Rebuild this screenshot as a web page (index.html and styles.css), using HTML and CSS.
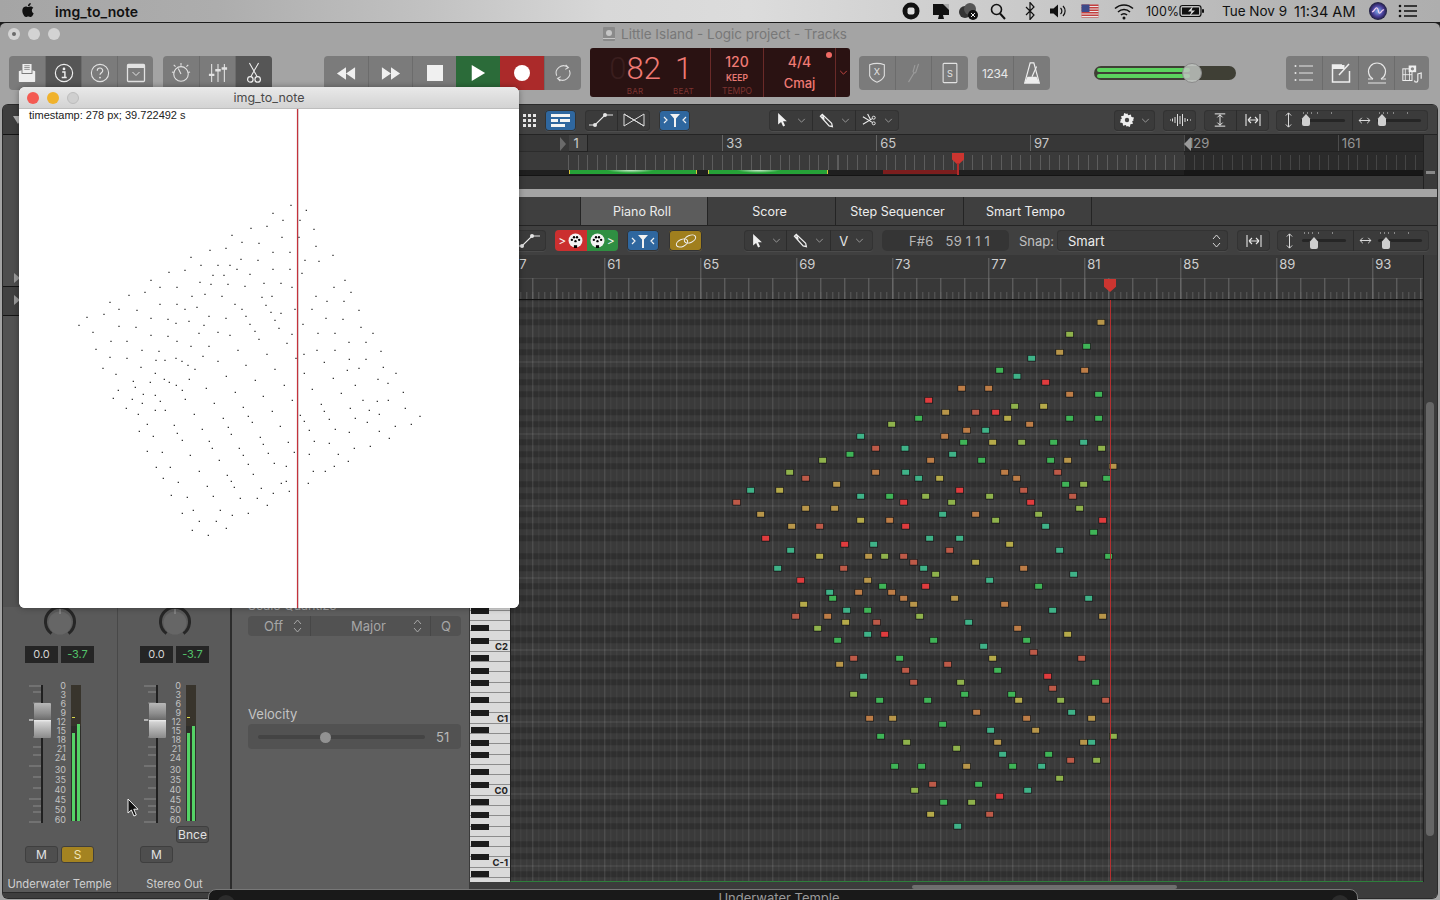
FILE: index.html
```html
<!DOCTYPE html>
<html lang="en">
<head>
<meta charset="utf-8">
<title>img_to_note</title>
<link rel="stylesheet" href="styles.css">
</head>
<body>
<svg class="defs" width="0" height="0">
  <defs>
    <symbol id="i-chev" viewBox="0 0 10 6"><path d="M1 1l4 4 4-4" fill="none" stroke="currentColor" stroke-width="1"/></symbol>
    <symbol id="i-ptr" viewBox="0 0 12 16"><path d="M1 0v13l3.400-2.800 2.300 5.200 2.200-1-2.300-5H11z" fill="currentColor"/></symbol>
    <symbol id="i-pen" viewBox="0 0 16 16"><path d="M1.500 3.500l2-2 10 9.500.8 3.500-3.500-.8zM3.500 1.500l1.500 4-3.500-2" fill="none" stroke="currentColor" stroke-width="1.300"/></symbol>
    <symbol id="i-sci" viewBox="0 0 16 16"><path d="M1 4l10 6M1 12l10-6M6 1l3 6" fill="none" stroke="currentColor" stroke-width="1.200"/><circle cx="12.500" cy="5" r="1.600" fill="none" stroke="currentColor"/><circle cx="12.500" cy="11" r="1.600" fill="none" stroke="currentColor"/></symbol>
    <symbol id="i-fith" viewBox="0 0 16 14"><path d="M1 1v12M15 1v12M3 7h10M3 7l3-3M3 7l3 3M13 7l-3-3M13 7l-3 3" fill="none" stroke="currentColor" stroke-width="1.100"/></symbol>
    <symbol id="i-curve" viewBox="0 0 26 16"><path d="M1 13h6L17 3h8" fill="none" stroke="currentColor" stroke-width="1.200"/><circle cx="7" cy="13" r="2" fill="currentColor"/><circle cx="17" cy="3" r="2" fill="currentColor"/></symbol>
    <symbol id="i-catch" viewBox="0 0 24 14"><path d="M1 4l3 3-3 3M23 4l-3 3 3 3" fill="none" stroke="currentColor" stroke-width="1.200"/><path d="M7 1h10l-4 4.500V14h-2V5.500z" fill="currentColor"/></symbol>
    <symbol id="i-vert" viewBox="0 0 10 18"><path d="M5 1v16M5 1L2 4M5 1l3 3M5 17l-3-3M5 17l3-3" fill="none" stroke="currentColor" stroke-width="1.100"/></symbol>
    <symbol id="i-horz" viewBox="0 0 14 10"><path d="M1 5h12M1 5l3-3M1 5l3 3M13 5l-3-3M13 5l-3 3" fill="none" stroke="currentColor" stroke-width="1.100"/></symbol>
    <symbol id="i-thumb" viewBox="0 0 10 12"><path d="M5 0l4 4.500V10a2 2 0 01-2 2H3a2 2 0 01-2-2V4.500z" fill="currentColor"/></symbol>
    <symbol id="i-midi" viewBox="0 0 14 14"><circle cx="7" cy="7" r="6.500" fill="currentColor"/><circle cx="3.600" cy="6.400" r="1.100" class="hole"/><circle cx="5.600" cy="4" r="1.100" class="hole"/><circle cx="8.400" cy="4" r="1.100" class="hole"/><circle cx="10.400" cy="6.400" r="1.100" class="hole"/><circle cx="7" cy="7.600" r="1.100" class="hole"/><rect x="5.500" y="11.400" width="3" height="2.600" class="hole"/></symbol>
    <linearGradient id="capg" x1="0" y1="0" x2="0" y2="1">
      <stop offset="0" stop-color="#b8b8b8"/><stop offset=".3" stop-color="#8d8d8d"/><stop offset=".49" stop-color="#6a6a6a"/><stop offset=".5" stop-color="#e8e8e8"/><stop offset=".55" stop-color="#d2d2d2"/><stop offset=".8" stop-color="#a9a9a9"/><stop offset="1" stop-color="#8a8a8a"/>
    </linearGradient>
  </defs>
</svg>

<header class="menubar">
  <svg class="apple" viewBox="0 0 24 24"><path d="M12.152 6.896c-.948 0-2.415-1.078-3.960-1.040-2.040.027-3.910 1.183-4.961 3.014-2.117 3.675-.546 9.103 1.519 12.090 1.013 1.454 2.208 3.090 3.792 3.039 1.520-.065 2.090-.987 3.935-.987 1.831 0 2.350.987 3.960.948 1.637-.026 2.676-1.480 3.676-2.948 1.156-1.688 1.636-3.325 1.662-3.415-.039-.013-3.182-1.221-3.220-4.857-.026-3.040 2.480-4.494 2.597-4.559-1.429-2.090-3.623-2.324-4.390-2.376-2-.156-3.675 1.090-4.610 1.090zM15.530 3.830c.843-1.012 1.400-2.427 1.245-3.830-1.207.052-2.662.805-3.532 1.818-.78.896-1.454 2.338-1.273 3.714 1.338.104 2.715-.688 3.559-1.701"/></svg>
  <span class="app-name">img_to_note</span>
  <div class="menu-right">
    <svg class="mi" viewBox="0 0 24 18"><circle cx="12" cy="9" r="8.500" fill="#111"/><rect x="8.500" y="5.500" width="7" height="7" rx="2" fill="#ddd"/></svg>
    <svg class="mi g6" viewBox="0 0 24 18"><path d="M4 2h16v11H4z" fill="#111"/><path d="M9 17h6l-1-4h-4z" fill="#111"/><path d="M14 2l6 6V2z" fill="#aaa"/></svg>
    <svg class="mi g3" viewBox="0 0 24 18"><circle cx="9" cy="10" r="6" fill="#333"/><circle cx="14" cy="7" r="6" fill="#555"/><circle cx="17" cy="13" r="5" fill="#111"/><path d="M15 11l4 4M19 11l-4 4" stroke="#eee" stroke-width="1"/></svg>
    <svg class="mi g6" viewBox="0 0 24 18"><circle cx="10.500" cy="7.500" r="5" fill="none" stroke="#111" stroke-width="1.600"/><path d="M14 11.500l5 5.500" stroke="#111" stroke-width="2"/></svg>
    <svg class="mi g8" viewBox="0 0 24 18"><path d="M8 5l8 8-4 4.500V.5l4 4.500-8 8" fill="none" stroke="#111" stroke-width="1.200"/></svg>
    <svg class="mi g4" viewBox="0 0 24 18"><path d="M4 6.500h3.500L12 2.500v13l-4.500-4H4z" fill="#111"/><path d="M14.500 6a4 4 0 010 6M17 4a7 7 0 010 10" fill="none" stroke="#111" stroke-width="1.200"/></svg>
    <svg class="mi g8" viewBox="0 0 24 18"><rect x="3.500" y="2.500" width="17" height="13" fill="#c33f3f"/><path d="M3.500 4.500h17M3.500 7h17M3.500 9.500h17M3.500 12h17M3.500 14.500h17" stroke="#e8e8e8" stroke-width="1"/><rect x="3.500" y="2.500" width="8" height="7.500" fill="#3d4a8a"/></svg>
    <svg class="mi g10" viewBox="0 0 24 18"><path d="M3 6.500a13 13 0 0118 0M6 10a8.500 8.500 0 0112 0M9 13a4 4 0 016 0" fill="none" stroke="#111" stroke-width="1.500"/><circle cx="12" cy="16" r="1.500" fill="#111"/></svg>
    <span class="mt pct">100%</span>
    <svg class="batt" viewBox="0 0 26 14"><rect x="1" y="1.500" width="21" height="11" rx="2.500" fill="none" stroke="#111" stroke-width="1.200"/><rect x="3" y="3.500" width="17" height="7" fill="#111"/><rect x="23" y="5" width="2" height="4" rx="1" fill="#111"/><path d="M14 2l-5 5.500h3.500L10.500 12l5.500-5.500h-3.500z" fill="#ddd"/></svg>
    <span class="mt date">Tue Nov 9</span>
    <span class="mt time">11:34 AM</span>
    <svg class="siri" viewBox="0 0 20 20"><defs><radialGradient id="siri"><stop offset="0" stop-color="#7fb6f0"/><stop offset=".6" stop-color="#4b3f9a"/><stop offset="1" stop-color="#1c1c3a"/></radialGradient></defs><circle cx="10" cy="10" r="9" fill="url(#siri)"/><path d="M4 11c3-1 3-5 5-4s1 6 3 5 2-4 4-3" fill="none" stroke="#f3d0f0" stroke-width="1.200"/></svg>
    <svg class="lst" viewBox="0 0 20 14"><path d="M6 2h13M6 7h13M6 12h13" stroke="#111" stroke-width="1.600"/><circle cx="2" cy="2" r="1.300" fill="#111"/><circle cx="2" cy="7" r="1.300" fill="#111"/><circle cx="2" cy="12" r="1.300" fill="#111"/></svg>
  </div>
</header>

<div class="logic">
  <div class="titlebar">
    <div class="lights">
      <span class="dot"><span class="dot-in"></span></span><span class="dot"></span><span class="dot"></span>
    </div>
    <div class="doc-title">
      <svg class="doc-ico" viewBox="0 0 12 14"><rect width="12" height="14" rx="1" fill="#8a8a8a"/><circle cx="6" cy="6" r="3" fill="#c6c6c6"/><rect y="11" width="12" height="1" fill="#c6c6c6"/></svg>
      <span>Little Island - Logic project - Tracks</span>
    </div>
  </div>

  <div class="toolbar">
    <div class="tg w144">
      <button class="tb w36"><svg class="ti" viewBox="0 0 22 24"><path d="M6 2h10v10H6z" fill="#eee"/><path d="M8 4h6M8 6h6M8 8h6" stroke="#888" stroke-width="1"/><path d="M2 10l3-1v4h12V9l3 1v11a1 1 0 01-1 1H3a1 1 0 01-1-1z" fill="#eee"/></svg></button>
      <button class="tb w36 on"><svg class="ti" viewBox="0 0 22 22"><circle cx="11" cy="11" r="9.500" fill="none" stroke="#eee" stroke-width="1.300"/><path d="M9 10h3v6M8.500 16h5.500" fill="none" stroke="#eee" stroke-width="1.600"/><circle cx="11" cy="6.500" r="1.500" fill="#eee"/></svg></button>
      <button class="tb w36"><svg class="ti" viewBox="0 0 22 22"><circle cx="11" cy="11" r="9.500" fill="none" stroke="#e2e2e2" stroke-width="1.200"/><path d="M8 8.500a3 3 0 116 0c0 2-3 2.500-3 4.500" fill="none" stroke="#e2e2e2" stroke-width="1.300"/><circle cx="11" cy="16" r="1" fill="#e2e2e2"/></svg></button>
      <button class="tb w36"><svg class="ti" viewBox="0 0 20 20"><rect x="1.500" y="1.500" width="17" height="17" rx="1" fill="none" stroke="#e2e2e2" stroke-width="1.300"/><rect x="1.500" y="1.500" width="17" height="3.500" fill="#e2e2e2"/><path d="M6.500 9l3.500 3.500L13.500 9" fill="none" stroke="#e2e2e2"/></svg></button>
    </div>
    <div class="tg w109 ml10">
      <button class="tb w36"><svg class="ti" viewBox="0 0 22 24"><circle cx="11" cy="13" r="8" fill="none" stroke="#e2e2e2" stroke-width="1.200"/><path d="M11 1v3M3 3l2 2M19 3l-2 2M1 11l2 .5M21 11l-2 .5M11 13L8 7" fill="none" stroke="#e2e2e2" stroke-width="1.200"/></svg></button>
      <button class="tb w36"><svg class="ti" viewBox="0 0 22 22"><path d="M4 1v20M11 1v20M18 1v20" stroke="#e2e2e2" stroke-width="1.200"/><path d="M1 13h6M8 8h6M15 6h6" stroke="#e2e2e2" stroke-width="2.600"/></svg></button>
      <button class="tb w37 on"><svg class="ti" viewBox="0 0 16 24"><path d="M3 1l8.500 15M13 1L4.500 16" fill="none" stroke="#eee" stroke-width="1.200"/><circle cx="4" cy="19" r="3" fill="none" stroke="#eee" stroke-width="1.300"/><circle cx="12" cy="19" r="3" fill="none" stroke="#eee" stroke-width="1.300"/></svg></button>
    </div>
    <div class="tg w257 ml52">
      <button class="tb w44"><svg class="tr" viewBox="0 0 22 14"><path d="M11 0v14L1 7zM21 0v14L11 7z" fill="#f0f0f0"/></svg></button>
      <button class="tb w44"><svg class="tr" viewBox="0 0 22 14"><path d="M1 0v14l10-7zM11 0v14l10-7z" fill="#f0f0f0"/></svg></button>
      <button class="tb w44"><svg class="tr2" viewBox="0 0 16 16"><rect width="16" height="16" fill="#f0f0f0"/></svg></button>
      <button class="tb w44 play"><svg class="tr2" viewBox="0 0 16 18"><path d="M1 0v18l15-9z" fill="#fff"/></svg></button>
      <button class="tb w44 rec"><svg class="tr2" viewBox="0 0 16 16"><circle cx="8" cy="8" r="8" fill="#fff"/></svg></button>
      <button class="tb w37"><svg class="ti" viewBox="0 0 22 22"><path d="M4 14A8 8 0 0116 4.500M18 8a8 8 0 01-12 9.500M14 2l3 3-3.500 2M8 20l-3-3 3.500-2" fill="none" stroke="#dcdcdc" stroke-width="1.200"/></svg></button>
    </div>
    <div class="lcd ml9">
      <div class="lcd-pos">
        <div class="lcd-cell w78"><span class="big"><span class="dim-digit">0</span>82</span><span class="lab">BAR</span></div>
        <div class="lcd-cell w30"><span class="big">1</span><span class="lab">BEAT</span></div>
      </div>
      <div class="lcd-tempo"><span class="t1">120</span><span class="t2">KEEP</span><span class="t3">TEMPO</span></div>
      <div class="lcd-sig"><span class="t1">4/4</span><span class="t4">Cmaj</span><span class="lcd-dot"></span></div>
      <div class="lcd-more"><svg class="ch red" viewBox="0 0 10 6"><use href="#i-chev"/></svg></div>
    </div>
    <div class="tg w109 ml9">
      <button class="tb w36"><svg class="ti" viewBox="0 0 20 24"><path d="M2 3q8-3 16 0v12q-2 5-8 7-6-2-8-7z" fill="none" stroke="#dedede" stroke-width="1.200"/><text x="10" y="14" class="tx">X</text></svg></button>
      <button class="tb w36"><svg class="ti" viewBox="0 0 20 24"><path d="M15 2l-3 9c-.5 1.500-2.500 1-3-.5l2-7M10 12L4 22" fill="none" stroke="#9a9a9a" stroke-width="1.300"/></svg></button>
      <button class="tb w37"><svg class="ti" viewBox="0 0 18 24"><rect x="1.500" y="1.500" width="15" height="21" rx="1" fill="none" stroke="#e2e2e2" stroke-width="1.200"/><text x="9" y="16" class="tx">S</text></svg></button>
    </div>
    <div class="tg w73 ml9">
      <button class="tb w36 num">1234</button>
      <button class="tb w37"><svg class="ti" viewBox="0 0 20 24"><path d="M8 1h4l6 22H2z" fill="none" stroke="#eee" stroke-width="1.300"/><path d="M2 23l3-7h10l3 7z" fill="#eee"/><path d="M10 16L15 5" stroke="#eee" stroke-width="1.300"/></svg></button>
    </div>
    <div class="vol ml44"><div class="vol-bars"><span class="vol-b"></span><span class="vol-b"></span></div><span class="vol-knob"></span></div>
    <div class="tg w143 ml50">
      <button class="tb w36"><svg class="ti" viewBox="0 0 20 20"><path d="M5 3h14M5 10h14M5 17h14" stroke="#e6e6e6" stroke-width="1.200"/><circle cx="1.500" cy="3" r="1" fill="#e6e6e6"/><circle cx="1.500" cy="10" r="1" fill="#e6e6e6"/><circle cx="1.500" cy="17" r="1" fill="#e6e6e6"/></svg></button>
      <button class="tb w36"><svg class="ti" viewBox="0 0 20 20"><path d="M11 2H1.500v17h17V8" fill="none" stroke="#eee" stroke-width="1.500"/><path d="M1.500 2h12v4h-12z" fill="#eee"/><path d="M8 12L18 1" stroke="#eee" stroke-width="1.500"/></svg></button>
      <button class="tb w36"><svg class="ti" viewBox="0 0 20 22"><path d="M6 17a8.500 8.500 0 118 0" fill="none" stroke="#e6e6e6" stroke-width="1.200"/><path d="M1 17h5M14 17h5M1 21h18" stroke="#e6e6e6" stroke-width="1.200"/></svg></button>
      <button class="tb w35"><svg class="ti" viewBox="0 0 24 24"><rect x="1" y="7" width="11" height="14" fill="none" stroke="#eee" stroke-width="1.200"/><path d="M4 7v14M9 7v14M1 14h11" stroke="#eee"/><rect x="8" y="3" width="9" height="8" fill="#eee"/><circle cx="12.500" cy="7" r="2" fill="#888"/><path d="M15 21a2 2 0 104 0V13l4-1v7" fill="none" stroke="#eee" stroke-width="1.400"/></svg></button>
    </div>
  </div>

  <div class="main">
    <aside class="leftcol">
      <div class="trk-top">
        <div class="trk-head"><span class="tri-down"></span></div>
        <div class="trk-fill"><span class="tri-right"></span></div>
        <div class="trk-row"><span class="tri-right"></span></div>
        <div class="trk-rest"></div>
      </div>
      <div class="mixer">
        <section class="strip s1">
          <div class="knob-row"><svg class="knob" viewBox="0 0 32 32"><circle cx="16" cy="16" r="11.500" fill="#666"/><path d="M7.500 26.500A14.500 14.500 0 1124.500 26.500" fill="none" stroke="#262626" stroke-width="3"/><path d="M16 2v5" stroke="#999" stroke-width="1"/></svg></div>
          <div class="vals"><span class="val">0.0</span><span class="val grn">-3.7</span></div>
          <div class="fader-row">
            <svg class="fader" viewBox="0 0 25 138"><path d="M2 1h12M6 7h8M6 18h8M2 35h12M6 52h8M6 62h8M6 70h8M2 81h12M6 92h8M6 103h8M2 114h12M6 121h8M6 127h8M2 137h12" stroke="#8a8a8a" stroke-width="1"/><rect x="14" width="2" height="138" fill="#202020"/><rect x="7" y="18" width="17" height="35" rx="1" fill="url(#capg)"/><path d="M2 35h4" stroke="#eee"/></svg>
            <div class="scale"><span>0</span><span>3</span><span>6</span><span>9</span><span>12</span><span>15</span><span>18</span><span>21</span><span>24</span><span class="far">30</span><span>35</span><span>40</span><span>45</span><span>50</span><span>60</span></div>
            <div class="meter"><span class="mbar b1"></span><span class="mbar b2"></span><span class="peak"></span></div>
          </div>
          <div class="bnce-row"></div>
          <div class="ms"><span class="msb">M</span><span class="msb solo">S</span></div>
          <div class="name"><span>Underwater Temple</span></div>
        </section>
        <section class="strip s2">
          <div class="knob-row"><svg class="knob" viewBox="0 0 32 32"><circle cx="16" cy="16" r="11.500" fill="#666"/><path d="M7.500 26.500A14.500 14.500 0 1124.500 26.500" fill="none" stroke="#262626" stroke-width="3"/><path d="M16 2v5" stroke="#999" stroke-width="1"/></svg></div>
          <div class="vals"><span class="val">0.0</span><span class="val grn">-3.7</span></div>
          <div class="fader-row">
            <svg class="fader" viewBox="0 0 25 138"><path d="M2 1h12M6 7h8M6 18h8M2 35h12M6 52h8M6 62h8M6 70h8M2 81h12M6 92h8M6 103h8M2 114h12M6 121h8M6 127h8M2 137h12" stroke="#8a8a8a" stroke-width="1"/><rect x="14" width="2" height="138" fill="#202020"/><rect x="7" y="18" width="17" height="35" rx="1" fill="url(#capg)"/><path d="M2 35h4" stroke="#eee"/></svg>
            <div class="scale"><span>0</span><span>3</span><span>6</span><span>9</span><span>12</span><span>15</span><span>18</span><span>21</span><span>24</span><span class="far">30</span><span>35</span><span>40</span><span>45</span><span>50</span><span>60</span></div>
            <div class="meter"><span class="mbar b1"></span><span class="mbar b2 b2s"></span><span class="peak"></span></div>
          </div>
          <div class="bnce-row"><span class="msb bnce">Bnce</span></div>
          <div class="ms"><span class="msb">M</span></div>
          <div class="name"><span>Stereo Out</span></div>
        </section>
      </div>
      <div class="left-foot"></div>
    </aside>

    <div class="rightcol">
      <section class="tracks">
        <div class="trackbar">
          <button class="plain"><svg class="gridi" viewBox="0 0 13 13"><path d="M0 0h3v3H0zM5 0h3v3H5zM10 0h3v3h-3zM0 5h3v3H0zM5 5h3v3H5zM10 5h3v3h-3zM0 10h3v3H0zM5 10h3v3H5zM10 10h3v3h-3z" fill="#e6e6e6"/></svg></button>
          <button class="dg blue w31"><svg class="listi" viewBox="0 0 19 13"><path d="M0 0h19v3H0zM0 5h7v3H0zM9 5h10v3H9zM0 10h14v3H0z" fill="#f4f4f4"/></svg></button>
          <div class="dg w65 ml9">
            <button class="seg"><svg class="si26" viewBox="0 0 26 16"><use href="#i-curve"/></svg></button>
            <button class="seg"><svg class="si22" viewBox="0 0 22 14"><path d="M1 1v12l20-12v12zM1 1l20 12" fill="none" stroke="#ddd" stroke-width="1"/></svg></button>
          </div>
          <button class="dg blue w31 ml9"><svg class="si24" viewBox="0 0 24 14"><use href="#i-catch"/></svg></button>
          <div class="dg w130 tools">
            <button class="seg"><svg class="ptr" viewBox="0 0 12 16"><use href="#i-ptr"/></svg><svg class="ch" viewBox="0 0 10 6"><use href="#i-chev"/></svg></button>
            <button class="seg"><svg class="pen" viewBox="0 0 16 16"><use href="#i-pen"/></svg><svg class="ch" viewBox="0 0 10 6"><use href="#i-chev"/></svg></button>
            <button class="seg"><svg class="pen" viewBox="0 0 16 16"><use href="#i-sci"/></svg><svg class="ch" viewBox="0 0 10 6"><use href="#i-chev"/></svg></button>
          </div>
          <div class="dg w41 gear"><button class="seg"><svg class="gearI" viewBox="0 0 14 14"><path d="M7 0l1.300 2.200 2.600-.8.500 2.600 2.600.5-.8 2.500L14 7l-1.800 1.300.8 2.500-2.600.5-.5 2.600-2.600-.8L7 14l-1.300-2.100-2.600.8-.5-2.600L0 9.600l.8-2.500L0 7l1.800-1.300L1 3.200l2.600-.5.500-2.600 2.600.8z" fill="#eee"/><circle cx="7" cy="7" r="2.200" fill="#444"/></svg><svg class="ch" viewBox="0 0 10 6"><use href="#i-chev"/></svg></button></div>
          <button class="dg w33 ml8"><svg class="si22" viewBox="0 0 22 14"><path d="M1 7h1M3.500 5.500v3M6 4v6M8.500 1v12M11 3v8M13.500 1v12M16 5v4M18.500 6v2M21 7h1" stroke="#ddd" stroke-width="1"/></svg></button>
          <div class="dg w65 ml8">
            <button class="seg"><svg class="si16" viewBox="0 0 14 16"><path d="M1 1h12M1 15h12M7 2v12M7 2L4 5M7 2l3 3M7 14l-3-3M7 14l3-3" fill="none" stroke="#eee" stroke-width="1.100"/></svg></button>
            <button class="seg"><svg class="si16" viewBox="0 0 16 14"><use href="#i-fith"/></svg></button>
          </div>
          <div class="dg w152 ml7 zoomers">
            <div class="zm"><svg class="za" viewBox="0 0 10 18"><use href="#i-vert"/></svg><span class="ztrack"><span class="zticks"></span><svg class="zthumb" viewBox="0 0 10 12"><use href="#i-thumb"/></svg></span></div>
            <div class="zm"><svg class="zb" viewBox="0 0 14 10"><use href="#i-horz"/></svg><span class="ztrack"><span class="zticks"></span><svg class="zthumb" viewBox="0 0 10 12"><use href="#i-thumb"/></svg></span></div>
          </div>
        </div>
        <div class="overview">
          <div class="ov-main">
            <div class="ov-labels"><span class="ov-first">1</span><span>33</span><span>65</span><span>97</span><span>129</span><span>161</span></div>
            <div class="ov-ticks"></div>
            <div class="ov-regions"><span class="reg r1"></span><span class="reg r2"></span><span class="reg r3"></span></div>
            <div class="ov-low"></div>
            <span class="ov-shade"></span>
            <span class="ov-left"></span>
            <span class="ov-right"></span>
            <span class="ov-cell"></span>
            <span class="ov-head"></span><span class="ov-line"></span>
          </div>
          <div class="ov-side"><span class="ov-grab"></span></div>
        </div>
      </section>

      <section class="editor">
        <div class="inspector">
          <div class="sq-label">Scale Quantize</div>
          <div class="sq-row"><span class="sq a">Off <svg class="updown" viewBox="0 0 9 14"><path d="M1 5l3.500-4L8 5M1 9l3.500 4L8 9" fill="none" stroke="#a9a9a9"/></svg></span><span class="sq b">Major <svg class="updown" viewBox="0 0 9 14"><path d="M1 5l3.500-4L8 5M1 9l3.500 4L8 9" fill="none" stroke="#a9a9a9"/></svg></span><span class="sq c">Q</span></div>
          <div class="vel-label">Velocity</div>
          <div class="vel-box"><span class="vel-track"><span class="vel-knob"></span></span><span class="vel-val">51</span></div>
        </div>
        <div class="pane">
          <div class="tabs"><span class="tab act">Piano Roll</span><span class="tab">Score</span><span class="tab">Step Sequencer</span><span class="tab">Smart Tempo</span></div>
          <div class="edbar">
            <button class="dg w36 edfirst"><svg class="si26" viewBox="0 0 26 16"><use href="#i-curve"/></svg></button>
            <div class="midi ml9">
              <button class="md red"><span class="gt">&gt;</span><svg class="mico" viewBox="0 0 14 14"><use href="#i-midi"/></svg></button>
              <button class="md green"><svg class="mico" viewBox="0 0 14 14"><use href="#i-midi"/></svg><span class="gt">&gt;</span></button>
            </div>
            <button class="dg blue w32 ml9"><svg class="si24" viewBox="0 0 24 14"><use href="#i-catch"/></svg></button>
            <button class="dg gold w33 ml10"><svg class="si22" viewBox="0 0 22 14"><ellipse cx="7" cy="9" rx="6" ry="3.500" transform="rotate(-25 7 9)" fill="none" stroke="#eee" stroke-width="1.100"/><ellipse cx="15" cy="5" rx="6" ry="3.500" transform="rotate(-25 15 5)" fill="none" stroke="#eee" stroke-width="1.100"/></svg></button>
            <div class="dg w129 ml42">
              <button class="seg"><svg class="ptr" viewBox="0 0 12 16"><use href="#i-ptr"/></svg><svg class="ch" viewBox="0 0 10 6"><use href="#i-chev"/></svg></button>
              <button class="seg"><svg class="pen" viewBox="0 0 16 16"><use href="#i-pen"/></svg><svg class="ch" viewBox="0 0 10 6"><use href="#i-chev"/></svg></button>
              <button class="seg"><span class="vsel">V</span><svg class="ch" viewBox="0 0 10 6"><use href="#i-chev"/></svg></button>
            </div>
            <div class="readout ml9"><span>F#6</span><span class="rd2">59 1 1 1</span></div>
            <span class="snap-label">Snap:</span>
            <div class="dg w171 snap"><span>Smart</span><svg class="updown" viewBox="0 0 9 14"><path d="M1 5l3.500-4L8 5M1 9l3.500 4L8 9" fill="none" stroke="#d6d6d6"/></svg></div>
            <button class="dg w33 ml9"><svg class="si16" viewBox="0 0 16 14"><use href="#i-fith"/></svg></button>
            <div class="dg w152 ml7 zoomers">
              <div class="zm"><svg class="za" viewBox="0 0 10 18"><use href="#i-vert"/></svg><span class="ztrack"><span class="zticks"></span><svg class="zthumb t2" viewBox="0 0 10 12"><use href="#i-thumb"/></svg></span></div>
              <div class="zm"><svg class="zb" viewBox="0 0 14 10"><use href="#i-horz"/></svg><span class="ztrack"><span class="zticks"></span><svg class="zthumb t3" viewBox="0 0 10 12"><use href="#i-thumb"/></svg></span></div>
            </div>
          </div>
          <div class="rulerwrap">
            <div class="ruler">
              <div class="rlabels"><span>57</span><span>61</span><span>65</span><span>69</span><span>73</span><span>77</span><span>81</span><span>85</span><span>89</span><span>93</span></div>
              <span class="rhead"></span>
            </div>
            <div class="sidecol"></div>
          </div>
          <div class="gridrow">
            <div class="keys">
              <div class="oct">C6</div><div class="oct">C5</div><div class="oct">C4</div><div class="oct">C3</div><div class="oct">C2</div><div class="oct">C1</div><div class="oct">C0</div><div class="oct">C-1</div>
            </div>
            <div class="grid">
              <svg class="notes" viewBox="0 0 912 582">
                <g class="nn" transform="translate(210 10) scale(.33333) translate(-10.500 -7.500)">
                  <path class="nt" d="M1143 37h21v15h-21zM1019 127h21v15h-21zM677 307h21v15h-21zM1043 451h21v15h-21zM1179 469h21v15h-21zM350 523h21v15h-21zM257 595h21v15h-21zM344 595h21v15h-21zM122 613h21v15h-21zM215 649h21v15h-21zM446 739h21v15h-21z"/>
                  <path class="no" d="M1094 181h21v15h-21zM725 235h21v15h-21zM806 235h21v15h-21zM1049 253h21v15h-21zM929 343h21v15h-21zM740 361h21v15h-21zM674 379h21v15h-21zM632 451h21v15h-21zM467 487h21v15h-21zM854 487h21v15h-21zM890 505h21v15h-21zM509 631h21v15h-21zM767 613h21v15h-21zM911 775h21v15h-21z"/>
                  <path class="nr" d="M767 307h21v15h-21zM467 415h21v15h-21zM257 505h21v15h-21zM1013 487h21v15h-21zM911 541h21v15h-21zM50 577h21v15h-21zM299 649h21v15h-21zM689 721h21v15h-21zM551 739h21v15h-21zM581 757h21v15h-21zM371 775h21v15h-21zM1058 559h21v15h-21z"/>
                  <path class="nb" d="M977 217h21v15h-21zM626 271h21v15h-21zM827 307h21v15h-21zM719 541h21v15h-21zM551 577h21v15h-21zM932 577h21v15h-21zM557 649h21v15h-21zM1148 631h21v15h-21zM137 685h21v15h-21zM374 703h21v15h-21z"/>
                  <path class="ny" d="M971 289h21v15h-21zM863 325h21v15h-21zM818 397h21v15h-21zM659 505h21v15h-21zM179 541h21v15h-21zM422 631h21v15h-21zM869 703h21v15h-21zM299 739h21v15h-21zM767 757h21v15h-21z"/>
                  <path class="nl" d="M1049 73h21v15h-21zM884 289h21v15h-21zM515 343h21v15h-21zM905 397h21v15h-21zM1145 415h21v15h-21zM308 451h21v15h-21zM209 487h21v15h-21zM1091 523h21v15h-21zM617 559h21v15h-21zM809 559h21v15h-21zM695 577h21v15h-21zM1079 595h21v15h-21zM956 613h21v15h-21zM827 631h21v15h-21zM494 739h21v15h-21zM647 793h21v15h-21z"/>
                  <path class="ng" d="M1100 109h21v15h-21zM839 181h21v15h-21zM1136 253h21v15h-21zM596 325h21v15h-21zM1049 325h21v15h-21zM1136 325h21v15h-21zM731 397h21v15h-21zM1001 397h21v15h-21zM390 433h21v15h-21zM785 451h21v15h-21zM992 451h21v15h-21zM1160 505h21v15h-21zM1037 523h21v15h-21zM509 559h21v15h-21zM1121 667h21v15h-21zM1166 739h21v15h-21z"/>
                  <path class="nc" d="M935 145h21v15h-21zM891 199h21v15h-21zM797 361h21v15h-21zM422 379h21v15h-21zM1091 397h21v15h-21zM555 415h21v15h-21zM698 433h21v15h-21zM557 487h21v15h-21zM596 505h21v15h-21zM92 541h21v15h-21zM422 559h21v15h-21zM668 613h21v15h-21zM977 649h21v15h-21zM629 685h21v15h-21zM719 685h21v15h-21zM461 703h21v15h-21zM212 721h21v15h-21zM1019 721h21v15h-21zM173 775h21v15h-21zM611 775h21v15h-21zM1061 793h21v15h-21z"/>
                </g>
                <g class="nn" transform="translate(260 270) scale(.33333) translate(-10.500 -7.500)">
                  <path class="nb" d="M92 31h21v15h-21zM467 49h21v15h-21zM344 193h21v15h-21zM833 319h21v15h-21zM689 679h21v15h-21z"/>
                  <path class="nr" d="M320 157h21v15h-21zM251 265h21v15h-21zM407 301h21v15h-21zM431 337h21v15h-21zM659 733h21v15h-21zM791 247h21v15h-21zM935 265h21v15h-21zM533 283h21v15h-21zM848 355h21v15h-21zM1007 391h21v15h-21zM902 571h21v15h-21zM488 643h21v15h-21zM77 139h21v15h-21z"/>
                  <path class="no" d="M266 67h21v15h-21zM365 67h21v15h-21zM401 85h21v15h-21zM704 103h21v15h-21zM173 139h21v15h-21zM743 175h21v15h-21zM620 427h21v15h-21zM299 445h21v15h-21zM770 445h21v15h-21z"/>
                  <path class="nt" d="M293 31h21v15h-21zM554 85h21v15h-21zM431 103h21v15h-21zM998 139h21v15h-21zM209 283h21v15h-21zM368 445h21v15h-21zM965 445h21v15h-21zM797 481h21v15h-21zM683 517h21v15h-21zM941 517h21v15h-21zM590 589h21v15h-21z"/>
                  <path class="ny" d="M101 103h21v15h-21zM227 157h21v15h-21zM893 193h21v15h-21zM668 265h21v15h-21zM746 391h21v15h-21zM482 733h21v15h-21z"/>
                  <path class="nl" d="M449 139h21v15h-21zM143 175h21v15h-21zM572 337h21v15h-21zM872 391h21v15h-21zM251 373h21v15h-21zM410 517h21v15h-21zM560 535h21v15h-21zM980 571h21v15h-21zM869 625h21v15h-21zM434 661h21v15h-21zM605 697h21v15h-21zM1030 499h21v15h-21z"/>
                  <path class="ng" d="M338 49h21v15h-21zM806 49h21v15h-21zM188 85h21v15h-21zM293 121h21v15h-21zM203 211h21v15h-21zM491 211h21v15h-21zM770 211h21v15h-21zM389 265h21v15h-21zM683 301h21v15h-21zM977 337h21v15h-21zM584 373h21v15h-21zM725 373h21v15h-21zM329 391h21v15h-21zM473 391h21v15h-21zM518 463h21v15h-21zM332 499h21v15h-21zM836 553h21v15h-21zM374 589h21v15h-21zM455 589h21v15h-21zM728 589h21v15h-21zM626 643h21v15h-21zM521 697h21v15h-21z"/>
                  <path class="nc" d="M659 31h21v15h-21zM179 67h21v15h-21zM956 85h21v15h-21zM230 121h21v15h-21zM848 121h21v15h-21zM596 157h21v15h-21zM293 193h21v15h-21zM641 229h21v15h-21zM281 319h21v15h-21zM905 427h21v15h-21zM662 481h21v15h-21zM965 517h21v15h-21zM698 553h21v15h-21zM815 589h21v15h-21zM773 661h21v15h-21zM563 769h21v15h-21z"/>
                </g>
              </svg>
              <span class="playline"></span>
            </div>
            <div class="sidecol vs"><span class="vthumb"></span></div>
          </div>
          <div class="hscroll"><span class="hthumb"></span></div>
        </div>
      </section>
    </div>
  </div>
</div>

<div class="plotwin">
  <div class="pw-title">
    <span class="pw-light red"></span><span class="pw-light yel"></span><span class="pw-light off"></span>
    <span class="pw-name">img_to_note</span>
  </div>
  <div class="pw-body">
    <div class="pw-stamp">timestamp: 278 px; 39.722492 s</div>
    <svg class="plot" viewBox="0 0 500 499">
      <path class="vline" d="M279.500 0v499"/>
      <path class="hit" d="M278.500 0v499"/>
      <path class="dots" transform="translate(41 81) scale(.33333)" d="M691 46h4M737 61h4M637 70h4M667 91h4M718 91h4M571 115h4M619 109h4M514 136h4M664 142h4M715 142h4M544 157h4M595 160h4M448 181h4M496 175h4M637 187h4M688 187h4M391 202h4M541 208h4M592 211h4M733 211h4M421 226h4M472 226h4M508 226h4M325 247h4M373 241h4M529 238h4M637 238h4M688 238h4M457 256h4M490 256h4M568 253h4M724 250h4M271 271h4M418 277h4M451 283h4M502 283h4M610 280h4M661 280h4M298 292h4M349 292h4M553 289h4M694 292h4M205 316h4M253 307h4M394 319h4M433 313h4M484 319h4M604 322h4M634 319h4M148 337h4M298 343h4M349 343h4M523 343h4M616 346h4M175 358h4M229 361h4M373 358h4M409 352h4M544 358h4M703 358h4M130 373h4M631 367h4M661 370h4M79 382h4M271 385h4M322 388h4M445 379h4M496 385h4M556 379h4M643 391h4M55 406h4M175 409h4M226 412h4M346 400h4M385 394h4M430 406h4M568 403h4M655 415h4M727 403h4M97 427h4M271 436h4M322 439h4M415 430h4M472 427h4M508 436h4M583 424h4M694 433h4M151 454h4M199 454h4M349 454h4M595 448h4M391 469h4M445 469h4M679 460h4M106 478h4M244 481h4M295 484h4M532 481h4M619 493h4M730 493h4M427 499h4M148 502h4M199 505h4M346 505h4M286 511h4M313 511h4M364 514h4M472 514h4M706 505h4M127 535h4M241 532h4M382 526h4M556 526h4M403 538h4M643 538h4"/>
      <path class="dots" transform="translate(81 251) scale(.33333)" d="M46 43h4M164 40h4M98 64h4M149 67h4M191 58h4M206 67h4M227 76h4M266 58h4M377 49h4M464 61h4M551 76h4M104 82h4M53 91h4M128 103h4M164 106h4M245 91h4M317 85h4M404 97h4M488 109h4M38 115h4M95 118h4M125 130h4M179 124h4M254 118h4M341 130h4M575 121h4M77 145h4M164 151h4M194 151h4M428 142h4M515 154h4M113 163h4M281 163h4M443 169h4M368 175h4M455 187h4M140 193h4M221 196h4M383 202h4M539 199h4M116 214h4M305 208h4M230 220h4M392 223h4M158 229h4M245 241h4M326 244h4M479 232h4M563 247h4M488 253h4M140 274h4M185 277h4M335 265h4M416 265h4M269 286h4M428 286h4M503 280h4M581 277h4M356 301h4M443 313h4M521 310h4M167 322h4M209 322h4M296 334h4M557 319h4M380 346h4M458 343h4M188 355h4M233 367h4M392 364h4M542 370h4M557 364h4M320 379h4M401 382h4M482 385h4M566 394h4M518 400h4M212 406h4M260 412h4M338 409h4M419 415h4M470 415h4M500 436h4M278 451h4M359 451h4M245 460h4M395 466h4M443 460h4M296 484h4M347 484h4M377 505h4M275 511h4M323 526h4M671 7h4M740 31h4M775 25h4M848 22h4M886 40h4M611 40h4M698 55h4M832 58h4M862 70h4M764 76h4M635 88h4M908 97h4M722 100h4M662 133h4M787 121h4M830 124h4M863 121h4M671 154h4M749 145h4M806 151h4M914 145h4M836 163h4M599 166h4M958 169h4M764 175h4M686 178h4M611 184h4M800 187h4M884 199h4M932 193h4M626 211h4M704 208h4M746 217h4M836 214h4M641 244h4M866 235h4M686 250h4M761 265h4M809 259h4M626 283h4M713 283h4M743 304h4M701 319h4M638 334h4M674 334h4M623 370h4"/>
      <path class="dots" transform="translate(271 86) scale(.33333)" d="M70 103h4M76 154h4M127 181h4M85 199h4M163 256h4M130 277h4M181 292h4M76 304h4M109 319h4M160 319h4M205 346h4M64 343h4M106 370h4M157 373h4M211 397h4M247 415h4M82 415h4M133 415h4M175 442h4M226 442h4M271 469h4M79 466h4M133 466h4M176 493h4M226 493h4"/>
    </svg>
  </div>
</div>

<div class="floatbar"><span class="fb-dot"></span><span class="fb-name">Underwater Temple</span><span class="fb-dot"></span></div>

<svg class="cursor" viewBox="0 0 12 19"><path d="M1 1v14l3.400-3 2.500 6 2.400-1-2.500-5.800H11z" fill="#111" stroke="#eee" stroke-width="1"/></svg>
</body>
</html>
```

FILE: styles.css
```css
* { box-sizing: border-box; }
html, body { margin: 0; padding: 0; }
body {
  width: 1440px; height: 900px; overflow: hidden; position: relative;
  background: #1c1c1c; color: #ddd;
  font-family: Inter, "Liberation Sans", sans-serif;
  font-size: 12px;
}
button { margin: 0; padding: 0; border: 0; background: none; color: inherit; font: inherit; display: flex; align-items: center; justify-content: center; }
.defs { position: absolute; }

/* menu bar */
.menubar {
  height: 22px; display: flex; align-items: center; padding-left: 21px; color: #111;
  background: linear-gradient(90deg, #a5a5a5 0, #adadad 15%, #c2c2c2 30%, #d8d8d8 42%, #dcdcdc 52%, #d2d2d2 62%, #c6c6c6 75%, #b4b4b4 90%, #aeaeae 100%);
}
.apple { width: 14px; height: 16px; fill: #111; margin-top: -2px; }
.app-name { margin-left: 20px; font-weight: 600; font-size: 14px; letter-spacing: .1px; }
.menu-right { margin-left: auto; display: flex; align-items: center; padding-right: 22px; }
.mi { width: 24px; height: 18px; }
.g3 { margin-left: 3px; } .g4 { margin-left: 4px; } .g6 { margin-left: 6px; } .g8 { margin-left: 8px; } .g10 { margin-left: 10px; }
.mt { font-size: 14px; color: #111; white-space: nowrap; }
.pct { margin-left: 10px; font-size: 12.500px; width: 30px; }
.batt { width: 26px; height: 14px; margin-left: 3px; }
.date { margin-left: 17px; font-size: 13.500px; width: 64px; }
.time { margin-left: 8px; font-size: 14.500px; width: 60px; }
.siri { width: 20px; height: 20px; margin-left: 14px; }
.lst { width: 20px; height: 14px; margin-left: 10px; }

/* logic window */
.logic {
  height: 878px; display: flex; flex-direction: column; background: #a4a4a4;
  border-top: 1px solid #1a1a1a; border-radius: 6px 6px 0 0; position: relative;
}
.titlebar { height: 25px; display: flex; align-items: center; justify-content: center; position: relative; flex: none; }
.lights { position: absolute; left: 8px; top: 5px; display: flex; gap: 8px; }
.dot { width: 12px; height: 12px; border-radius: 50%; background: #d3d3d3; display: flex; align-items: center; justify-content: center; }
.dot-in { width: 4px; height: 4px; border-radius: 50%; background: #6a6a6a; }
.doc-title { display: flex; align-items: center; gap: 6px; color: #787878; font-size: 13.500px; margin: -3px 0 0 10px; }
.doc-ico { width: 12px; height: 14px; }

.toolbar { height: 57px; flex: none; display: flex; padding-left: 9px; align-items: flex-start; }
.toolbar > .tg, .toolbar > .vol { margin-top: 8px; }
.tg { display: flex; height: 34px; border-radius: 4px; background: #7b7b7b; overflow: hidden; flex: none; }
.tb { height: 34px; border-left: 1px solid #6c6c6c; flex: none; }
.tb:first-child { border-left: 0; }
.tb.on { background: #565656; }
.tb.play { background: #2b6b39; border-left: 0; }
.tb.rec { background: #ab2a2a; border-left: 0; }
.tb.num { color: #e8e8e8; font-size: 12px; letter-spacing: -.3px; }
.ti { width: 20px; height: 22px; }
.tr { width: 20px; height: 13px; }
.tr2 { width: 16px; height: 16px; }
.tx { font: 10px Inter, "Liberation Sans", sans-serif; fill: #e4e4e4; text-anchor: middle; }
.w30 { width: 30px; } .w31 { width: 31px; } .w32 { width: 32px; } .w33 { width: 33px; } .w35 { width: 35px; } .w36 { width: 36px; } .w37 { width: 37px; } .w41 { width: 41px; } .w44 { width: 44px; }
.w65 { width: 65px; } .w73 { width: 73px; } .w78 { width: 78px; } .w109 { width: 109px; } .w129 { width: 129px; } .w130 { width: 130px; } .w143 { width: 143px; } .w144 { width: 144px; } .w152 { width: 152px; } .w171 { width: 171px; } .w257 { width: 257px; }
.ml7 { margin-left: 7px; } .ml8 { margin-left: 8px; } .ml9 { margin-left: 9px; } .ml10 { margin-left: 10px; } .ml42 { margin-left: 42px; } .ml44 { margin-left: 44px; } .ml50 { margin-left: 50px; } .ml52 { margin-left: 52px; }

.lcd { width: 260px; height: 49px; background: #2a1212; border-radius: 3px; display: flex; color: #ee7a74; flex: none; }
.lcd-pos { width: 121px; padding: 0 13px 0 10px; display: flex; border-right: 1px solid #6a2a28; }
.lcd-cell { display: flex; flex-direction: column; align-items: center; }
.big { font-family: Roboto, sans-serif; font-weight: 300; font-size: 31px; line-height: 35px; margin-top: 3px; color: #f07a74; white-space: nowrap; }
.dim-digit { color: #3a1e1e; }
.lab { font-size: 8px; color: #7e3330; line-height: 10px; letter-spacing: .2px; }
.lcd-tempo { width: 53px; display: flex; flex-direction: column; align-items: center; border-right: 1px solid #6a2a28; }
.t1 { font-size: 14px; font-weight: 500; line-height: 16px; margin-top: 6px; color: #f07a74; }
.t2 { font-size: 8.500px; font-weight: 600; line-height: 10px; margin-top: 3px; color: #e87a74; }
.t3 { font-size: 8.500px; line-height: 10px; margin-top: 3px; color: #7e3330; }
.lcd-sig { width: 72px; display: flex; flex-direction: column; align-items: center; position: relative; border-right: 1px solid #6a2a28; }
.t4 { font-size: 13px; font-weight: 500; line-height: 16px; margin-top: 5px; color: #f07a74; }
.lcd-dot { position: absolute; right: 3px; top: 4px; width: 6px; height: 6px; border-radius: 50%; background: #f06a64; }
.lcd-more { flex: 1; display: flex; align-items: center; justify-content: center; }
.ch { width: 9px; height: 5px; color: #a8a8a8; margin-left: 7px; flex: none; }
.ch.red { color: #e0504c; margin-left: 0; width: 9px; }

.vol { width: 142px; height: 14px; border-radius: 7px; background: #3f3f35; position: relative; margin-top: 18px !important; flex: none; }
.vol-bars { width: 96px; padding: 2px 0 0 3px; display: flex; flex-direction: column; gap: 2px; }
.vol-b { height: 4px; background: #5bd45e; border-radius: 2px; }
.vol-knob { position: absolute; left: 88px; top: -3px; width: 20px; height: 20px; border-radius: 50%; background: rgba(190,195,190,.85); border: 1px solid #8a8a8a; }

/* main */
.main { flex: 1; min-height: 0; display: flex; margin: 0 3px 2px; background: #3b3b3b; border-radius: 5px; overflow: hidden; box-shadow: 0 0 0 1px #2a2a2a; }
.leftcol { width: 229px; flex: none; display: flex; flex-direction: column; background: #585858; border-right: 2px solid #2c2c2c; }
.trk-top { flex: 1; min-height: 0; display: flex; flex-direction: column; }
.trk-head { height: 30px; background: #3e3e3e; border-bottom: 1px solid #141414; position: relative; flex: none; }
.trk-fill { height: 152px; background: #4e4e4e; border-bottom: 1px solid #141414; position: relative; flex: none; }
.trk-row { height: 29px; background: #414141; border-bottom: 1px solid #141414; position: relative; flex: none; }
.trk-rest { flex: 1; background: #525252; }
.tri-down { position: absolute; left: 10px; top: 11px; border-left: 5px solid transparent; border-right: 5px solid transparent; border-top: 8px solid #b0b0b0; }
.tri-right { position: absolute; left: 11px; bottom: 3px; border-top: 5px solid transparent; border-bottom: 5px solid transparent; border-left: 6px solid #9a9a9a; }
.trk-row .tri-right { bottom: 10px; }

.mixer { height: 285px; display: flex; flex: none; background: #5a5a5a; }
.strip { padding-left: 22px; flex: none; display: flex; flex-direction: column; }
.s1 { width: 115px; border-right: 1px solid #484848; }
.s2 { width: 112px; }
.knob-row { width: 69px; height: 32px; display: flex; justify-content: center; }
.knob { width: 32px; height: 32px; }
.vals { display: flex; gap: 3px; margin-top: 7px; }
.val { width: 33px; height: 17px; background: #252525; color: #d4d4d4; font-size: 11px; line-height: 17px; text-align: center; }
.val.grn { color: #53c46a; }
.fader-row { display: flex; height: 138px; margin-top: 22px; padding-left: 2px; }
.fader { width: 25px; height: 138px; flex: none; }
.scale { width: 14px; margin-top: -4px; display: flex; flex-direction: column; align-items: flex-end; font-size: 9px; color: #c2c2c2; flex: none; }
.scale span { height: 9px; line-height: 9px; }
.scale span:nth-child(n+11) { margin-top: 1px; }
.scale .far { margin-top: 3px; }
.meter { width: 10px; height: 136px; margin-left: 5px; background: linear-gradient(#38342c 0 30%, #2e2e2a 30%); position: relative; flex: none; }
.mbar { position: absolute; bottom: 0; background: #55d266; }
.b1 { left: 1px; width: 3px; height: 88px; }
.b2 { left: 6px; width: 3px; height: 97px; }
.b2s { height: 95px; }
.peak { position: absolute; left: 1px; top: 32px; width: 3px; height: 1px; background: #d8d84a; }
.bnce-row { height: 17px; margin-top: 3px; display: flex; justify-content: flex-end; width: 69px; }
.ms { display: flex; gap: 3px; margin-top: 3px; }
.msb { width: 33px; height: 17px; background: #4e4e4e; border: 1px solid #3f3f3f; border-radius: 3px; color: #e2e2e2; font-size: 12px; line-height: 15px; text-align: center; }
.msb.solo { background: #a48321; color: #efe3b9; }
.msb.bnce { font-size: 12px; }
.name { width: 69px; margin-top: 14px; display: flex; justify-content: center; white-space: nowrap; font-size: 11.200px; color: #d0d0d0; line-height: 15px; }
.left-foot { height: 6px; background: #3e3e3e; flex: none; border-top: 1px solid #2a2a2a; }

.rightcol { flex: 1; min-width: 0; display: flex; flex-direction: column; background: #a4a4a4; gap: 8px; }
.tracks { height: 84px; flex: none; display: flex; flex-direction: column; background: #3a3a3a; }
.trackbar { height: 30px; flex: none; display: flex; align-items: center; padding: 1px 0 0 287px; background: #424242; border-bottom: 1px solid #242424; }
.plain { width: 26px; height: 20px; padding-right: 6px; }
.gridi { width: 13px; height: 13px; }
.listi { width: 19px; height: 13px; }
.dg { height: 21px; background: #3b3b3b; border-radius: 4px; box-shadow: inset 0 0 0 1px #333, 0 1px 0 rgba(255,255,255,.06); display: flex; align-items: center; justify-content: center; flex: none; color: #e6e6e6; }
.dg.blue { background: #2f679f; color: #f2f2f2; }
.dg.gold { background: #a07f1e; }
.seg { flex: 1; height: 100%; border-left: 1px solid #2c2c2c; }
.seg:first-child { border-left: 0; }
.si26 { width: 26px; height: 16px; }
.si24 { width: 24px; height: 14px; }
.si22 { width: 22px; height: 14px; }
.si16 { width: 16px; height: 14px; }
.ptr { width: 15px; height: 14px; color: #f0f0f0; }
.pen { width: 15px; height: 15px; color: #eee; }
.gearI { width: 14px; height: 14px; }
.vsel { font-size: 13px; color: #e6e6e6; }
.tools { margin-left: 79px; }
.gear { margin-left: 215px; }
.zoomers { justify-content: flex-start; }
.zm { flex: 1; height: 100%; display: flex; align-items: center; padding-left: 5px; border-left: 1px solid #2c2c2c; }
.zm:first-child { border-left: 0; }
.za { width: 9px; height: 16px; color: #ddd; margin: 0 8px 0 3px; flex: none; }
.zb { width: 13px; height: 9px; color: #ddd; margin-right: 6px; flex: none; }
.ztrack { width: 44px; height: 3px; background: #262626; border-radius: 2px; position: relative; flex: none; }
.zticks { position: absolute; left: 2px; top: -7px; width: 42px; height: 2px; background: repeating-linear-gradient(90deg, #888 0 1px, transparent 1px 4px) 0 0 / 12px 2px no-repeat, repeating-linear-gradient(90deg, #888 0 1px, transparent 1px 14px) 14px 0 no-repeat; }
.zthumb { position: absolute; left: 0; top: -5px; width: 10px; height: 12px; color: #cfcfcf; }
.zthumb.t2 { left: 7px; }
.zthumb.t3 { left: 3px; }

.overview { flex: 1; display: flex; min-height: 0; }
.ov-main { flex: 1; min-width: 0; position: relative; overflow: hidden; display: flex; flex-direction: column; }
.ov-labels { height: 17px; flex: none; display: flex; padding-left: 336.400px; background: #373737; color: #c8c8c8; font-size: 13px; line-height: 16px; border-bottom: 1px solid #2c2c2c; }
.ov-labels span { width: 153.900px; flex: none; padding-left: 3px; border-left: 1px solid #666; }
.ov-labels .ov-first { border-left: 0; padding-left: 5px; }
.ov-ticks { height: 18px; flex: none; background: #3a3a3a repeating-linear-gradient(90deg, #5c5c5c 0 1px, transparent 1px 9.625px) 336.400px 3px no-repeat; }
.ov-regions { height: 5px; flex: none; background: #1f1f1f; display: flex; }
.reg { height: 4px; display: block; flex: none; border-bottom: 0; }
.r1 { margin-left: 337px; width: 128px; background: radial-gradient(ellipse 24px 3px at 48% 0, #cdeccd, transparent), #26a238; border-left: 1px solid #d7c83a; border-right: 1px solid #d7c83a; }
.r2 { margin-left: 11px; width: 120px; background: radial-gradient(ellipse 22px 3px at 42% 0, #cdeccd, transparent), #26a238; border-left: 1px solid #d7c83a; border-right: 1px solid #d7c83a; }
.r3 { margin-left: 55px; width: 75px; background: #7c1e1e; }
.ov-low { flex: 1; background: #3a3a3a; border-top: 1px solid #141414; }
.ov-shade { position: absolute; left: 952px; right: 0; top: 0; bottom: 14px; background: rgba(0,0,0,.25); }
.ov-left { position: absolute; left: 328px; top: 2px; border-top: 7px solid transparent; border-bottom: 7px solid transparent; border-left: 6px solid #6a6a6a; }
.ov-right { position: absolute; left: 952px; top: 2px; border-top: 7px solid transparent; border-bottom: 7px solid transparent; border-right: 7px solid #9a9a9a; }
.ov-cell { position: absolute; left: 337px; top: 0; width: 19px; height: 17px; background: rgba(255,255,255,.06); border-right: 1px solid #222; border-bottom: 1px solid #222; }
.ov-head { position: absolute; left: 720px; top: 18px; width: 12px; height: 12px; background: #cc3530; clip-path: polygon(0 0, 100% 0, 100% 55%, 50% 100%, 0 55%); }
.ov-line { position: absolute; left: 725px; top: 28px; width: 2px; height: 12px; background: #b52a2a; }
.ov-side { width: 14px; flex: none; background: #3a3a3a; border-left: 1px solid #222; position: relative; }
.ov-grab { position: absolute; left: 2px; top: 36px; width: 9px; height: 3px; background: #888; }

/* editor */
.editor { flex: 1; min-height: 0; display: flex; background: #5e5e5e; }
.inspector { width: 238px; flex: none; padding: 403px 9px 0 16px; background: #5e5e5e; border-right: 1px solid #3a3a3a; }
.sq-label { font-size: 12.500px; color: #aaa; line-height: 12px; }
.sq-row { display: flex; height: 20px; margin-top: 4px; background: #525252; border-radius: 4px; color: #a6a6a6; font-size: 13px; width: 213px; }
.sq { display: flex; align-items: center; justify-content: space-between; border-left: 1px solid #474747; }
.sq.a { width: 62px; border-left: 0; padding: 0 8px 0 16px; }
.sq.b { width: 120px; padding: 0 8px 0 40px; }
.sq.c { width: 31px; justify-content: center; }
.updown { width: 9px; height: 14px; flex: none; }
.vel-label { margin-top: 70px; font-size: 13px; color: #c4c4c4; line-height: 16px; }
.vel-box { display: flex; align-items: center; width: 213px; height: 25px; margin-top: 2px; background: #525252; border-radius: 4px; padding-left: 10px; }
.vel-track { width: 167px; height: 4px; background: #444; border-radius: 2px; position: relative; }
.vel-knob { position: absolute; left: 62px; top: -3px; width: 11px; height: 11px; border-radius: 50%; background: #929292; }
.vel-val { margin-left: 11px; font-size: 13px; color: #b8b8b8; }

.pane { flex: 1; min-width: 0; display: flex; flex-direction: column; background: #3c3c3c; }
.tabs { height: 29px; flex: none; display: flex; padding-left: 110px; background: #3f3f3f; border-bottom: 1px solid #242424; }
.tab { width: 128px; flex: none; text-align: center; line-height: 30px; font-size: 12.500px; color: #ececec; border-right: 1px solid #242424; padding-right: 4px; }
.tab:first-child { border-left: 1px solid #242424; width: 128px; }
.tab.act { background: #5c5c5c; }
.edbar { height: 29px; flex: none; display: flex; align-items: center; padding-left: 40px; background: #404040; }
.midi { display: flex; width: 63px; height: 21px; border-radius: 4px; overflow: hidden; flex: none; }
.md { flex: 1; height: 100%; gap: 2px; color: #f4f4f4; }
.md.red { background: #cb2f2f; }
.md.green { background: #2f8f42; }
.mico { width: 15px; height: 15px; color: #f2f2f2; }
.md.red .hole { fill: #cb2f2f; }
.md.green .hole { fill: #2f8f42; }
.gt { font-size: 12px; }
.readout { width: 127px; height: 21px; background: #353535; border-radius: 5px; display: flex; align-items: center; padding-left: 27px; gap: 12px; font-size: 13px; color: #b8b8b8; letter-spacing: .2px; flex: none; }
.rd2 { word-spacing: 0; white-space: nowrap; }
.snap-label { width: 48px; padding-left: 10px; font-size: 13px; color: #c0c0c0; flex: none; }
.snap { justify-content: space-between; padding: 0 7px 0 11px; font-size: 13px; color: #ececec; }

.rulerwrap { height: 45px; flex: none; display: flex; }
.ruler { flex: 1; min-width: 0; position: relative; overflow: hidden; background: #383838; border-bottom: 1px solid #111; }
.rlabels { height: 23px; display: flex; padding-left: 38.300px; color: #cfcfcf; font-size: 13px; line-height: 18px; }
.rlabels span { width: 96px; flex: none; padding-left: 3px; }
.ruler::after { content: ""; position: absolute; left: 0; right: 0; top: 0; bottom: 0; pointer-events: none;
  background:
    linear-gradient(90deg, #6a6a6a 0 1px, transparent 1px) 38.300px 3px / 96px 100% repeat-x,
    linear-gradient(90deg, #6a6a6a 0 1px, transparent 1px) 14.300px 23px / 24px 100% repeat-x,
    linear-gradient(90deg, #5a5a5a 0 1px, transparent 1px) 2.300px 37px / 6px 100% repeat-x,
    linear-gradient(#4a4a4a, #4a4a4a) 0 23px / 100% 1px no-repeat;
}
.rhead { position: absolute; left: 634px; top: 24px; width: 12px; height: 13px; background: #cc3530; z-index: 1; clip-path: polygon(0 0, 100% 0, 100% 60%, 50% 100%, 0 60%); }
.sidecol { width: 14px; flex: none; background: #3c3c3c; border-left: 1px solid #222; }
.gridrow { height: 582px; flex: none; display: flex; }
.keys { width: 40px; flex: none; padding-left: 1px;
  background:
    linear-gradient(#1c1c1c 0 1px, transparent 1px 8px, #1c1c1c 8px 14px, transparent 14px 20px, #1c1c1c 20px 26px, transparent 26px 37px, #1c1c1c 37px 43px, transparent 43px 50px, #1c1c1c 50px 56px, transparent 56px 67px, #1c1c1c 67px 72px) 1px 0 / 18px 72px repeat-y,
    repeating-linear-gradient(#dadada 0 9.300px, #8c8c8c 9.300px 10.286px) 0 2px;
  display: flex; flex-direction: column;
}
.oct { height: 72px; flex: none; display: flex; align-items: flex-end; justify-content: flex-end; padding: 0 2px 8px 0; font-size: 9.500px; font-weight: 700; color: #222; line-height: 10px; }
.grid { flex: 1; min-width: 0; position: relative; overflow: hidden; border-bottom: 1px solid #2d7f3b; border-left: 1px solid #222;
  background:
    linear-gradient(90deg, rgba(255,255,255,.09) 0 1px, transparent 1px) 21.300px 0 / 24px 100%,
    linear-gradient(90deg, rgba(255,255,255,.05) 0 1px, transparent 1px) 3.300px 0 / 6px 100%,
    linear-gradient(#505050 0 1px, transparent 1px) 0 61.500px / 100% 72px,
    linear-gradient(#3a3a3a 0 6px, #2f2f2f 6px 12px, #3a3a3a 12px 18px, #2f2f2f 18px 24px, #3a3a3a 24px 36px, #2f2f2f 36px 42px, #3a3a3a 42px 48px, #2f2f2f 48px 54px, #3a3a3a 54px 66px, #2f2f2f 66px 72px) 0 1.300px / 100% 72px;
}
.notes { position: absolute; left: -1px; top: 0; width: 912px; height: 582px; }
.nn path { stroke: #141414; stroke-width: 4; paint-order: stroke; }
.nt { fill: #b8964a; } .no { fill: #bd7d47; } .nr { fill: #bd5a48; } .nb { fill: #e03c3e; }
.ny { fill: #b5aa4a; } .nl { fill: #8fb24c; } .ng { fill: #3fb457; } .nc { fill: #3fb288; }
.playline { position: absolute; left: 599px; top: 0; bottom: 0; width: 1px; background: #b42f2f; }
.vs { position: relative; }
.vthumb { position: absolute; left: 2px; top: 102px; width: 8px; height: 434px; background: #666; border-radius: 4px; }
.hscroll { flex: 1; background: #3c3c3c; position: relative; }
.hthumb { position: absolute; left: 442px; top: 3px; width: 265px; height: 4px; background: #6e6e6e; border-radius: 2px; }

/* floating plot window */
.plotwin { position: absolute; left: 19px; top: 87px; width: 500px; height: 521px; border-radius: 6px; overflow: hidden; background: #fff; box-shadow: 0 0 6px rgba(0,0,0,.35); display: flex; flex-direction: column; }
.pw-title { height: 22px; flex: none; background: linear-gradient(#e9e9e9, #d3d3d3); border-bottom: 1px solid #bdbdbd; display: flex; align-items: center; padding-left: 8px; gap: 8px; position: relative; }
.pw-light { width: 12px; height: 12px; border-radius: 50%; }
.pw-light.red { background: #f45a52; }
.pw-light.yel { background: #f0b22c; }
.pw-light.off { background: #cfcfcf; border: 1px solid #bcbcbc; }
.pw-name { position: absolute; left: 0; right: 0; top: 3px; text-align: center; color: #4a4a4a; font-size: 12.500px; }
.pw-body { flex: 1; position: relative; background: #fff; }
.pw-stamp { padding: 0 0 0 10px; color: #222; font-family: "Liberation Sans", sans-serif; font-size: 11px; line-height: 13px; }
.plot { position: absolute; left: 0; top: 0; width: 500px; height: 499px; }
.hit { stroke: #c4323c; stroke-width: 1.200; fill: none; }
.vline { stroke: #dedede; stroke-width: 1; fill: none; }
.dots { stroke: #333; stroke-width: 4; fill: none; }

.floatbar { position: absolute; left: 208px; top: 889px; width: 1150px; height: 20px; background: #191919; border: 1px solid #777; border-radius: 8px; display: flex; justify-content: space-between; padding: 1px 8px 0; color: #9a9a9a; font-size: 13px; }
.fb-dot { width: 18px; height: 18px; margin-top: 4px; border-radius: 50%; background: #2c2c2c; }
.fb-name { line-height: 14px; margin-right: 8px; }

.cursor { position: absolute; left: 127px; top: 798px; width: 12px; height: 19px; }
```
